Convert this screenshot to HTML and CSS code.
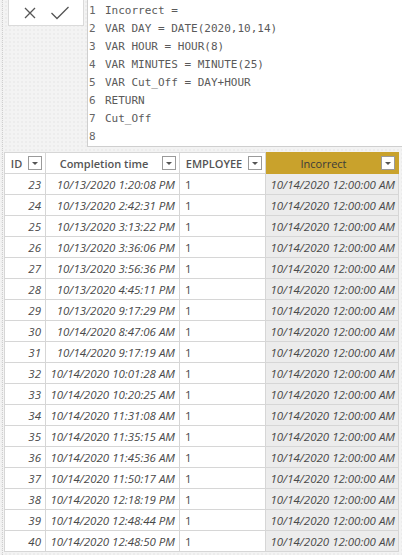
FILE: index.html
```html
<!DOCTYPE html>
<html>
<head>
<meta charset="utf-8">
<link rel="stylesheet" href="styles.css">
</head>
<body>
<div class="page">
  <div class="top">
    <div class="actions">
      <svg class="icon" width="14" height="14" viewBox="0 0 14 14"><path d="M2 2 L12 12 M12 2 L2 12" stroke="#555" stroke-width="1.3" fill="none"/></svg>
      <svg class="icon" width="20" height="14" viewBox="0 0 20 14"><path d="M1.5 7 L7 12.5 L18.5 1" stroke="#555" stroke-width="1.3" fill="none"/></svg>
    </div>
    <div class="editor">
      <div class="line"><span class="num">1</span><span>Incorrect =</span></div>
      <div class="line"><span class="num">2</span><span>VAR DAY = DATE(2020,10,14)</span></div>
      <div class="line"><span class="num">3</span><span>VAR HOUR = HOUR(8)</span></div>
      <div class="line"><span class="num">4</span><span>VAR MINUTES = MINUTE(25)</span></div>
      <div class="line"><span class="num">5</span><span>VAR Cut_Off = DAY+HOUR</span></div>
      <div class="line"><span class="num">6</span><span>RETURN</span></div>
      <div class="line"><span class="num">7</span><span>Cut_Off</span></div>
      <div class="line"><span class="num">8</span><span></span></div>
    </div>
  </div>
  <table class="grid">
    <colgroup><col class="c-id"><col class="c-time"><col class="c-emp"><col class="c-inc"></colgroup>
    <thead>
      <tr>
        <th><div class="hcell"><span class="hlabel">ID</span><span class="filter"></span></div></th>
        <th><div class="hcell"><span class="hlabel">Completion time</span><span class="filter"></span></div></th>
        <th><div class="hcell"><span class="hlabel">EMPLOYEE</span><span class="filter"></span></div></th>
        <th class="sel"><div class="hcell"><span class="hlabel">Incorrect</span><span class="filter"></span></div></th>
      </tr>
    </thead>
    <tbody>
      <tr><td class="id">23</td><td class="time">10/13/2020 1:20:08 PM</td><td class="emp">1</td><td class="inc">10/14/2020 12:00:00 AM</td></tr>
      <tr><td class="id">24</td><td class="time">10/13/2020 2:42:31 PM</td><td class="emp">1</td><td class="inc">10/14/2020 12:00:00 AM</td></tr>
      <tr><td class="id">25</td><td class="time">10/13/2020 3:13:22 PM</td><td class="emp">1</td><td class="inc">10/14/2020 12:00:00 AM</td></tr>
      <tr><td class="id">26</td><td class="time">10/13/2020 3:36:06 PM</td><td class="emp">1</td><td class="inc">10/14/2020 12:00:00 AM</td></tr>
      <tr><td class="id">27</td><td class="time">10/13/2020 3:56:36 PM</td><td class="emp">1</td><td class="inc">10/14/2020 12:00:00 AM</td></tr>
      <tr><td class="id">28</td><td class="time">10/13/2020 4:45:11 PM</td><td class="emp">1</td><td class="inc">10/14/2020 12:00:00 AM</td></tr>
      <tr><td class="id">29</td><td class="time">10/13/2020 9:17:29 PM</td><td class="emp">1</td><td class="inc">10/14/2020 12:00:00 AM</td></tr>
      <tr><td class="id">30</td><td class="time">10/14/2020 8:47:06 AM</td><td class="emp">1</td><td class="inc">10/14/2020 12:00:00 AM</td></tr>
      <tr><td class="id">31</td><td class="time">10/14/2020 9:17:19 AM</td><td class="emp">1</td><td class="inc">10/14/2020 12:00:00 AM</td></tr>
      <tr><td class="id">32</td><td class="time">10/14/2020 10:01:28 AM</td><td class="emp">1</td><td class="inc">10/14/2020 12:00:00 AM</td></tr>
      <tr><td class="id">33</td><td class="time">10/14/2020 10:20:25 AM</td><td class="emp">1</td><td class="inc">10/14/2020 12:00:00 AM</td></tr>
      <tr><td class="id">34</td><td class="time">10/14/2020 11:31:08 AM</td><td class="emp">1</td><td class="inc">10/14/2020 12:00:00 AM</td></tr>
      <tr><td class="id">35</td><td class="time">10/14/2020 11:35:15 AM</td><td class="emp">1</td><td class="inc">10/14/2020 12:00:00 AM</td></tr>
      <tr><td class="id">36</td><td class="time">10/14/2020 11:45:36 AM</td><td class="emp">1</td><td class="inc">10/14/2020 12:00:00 AM</td></tr>
      <tr><td class="id">37</td><td class="time">10/14/2020 11:50:17 AM</td><td class="emp">1</td><td class="inc">10/14/2020 12:00:00 AM</td></tr>
      <tr><td class="id">38</td><td class="time">10/14/2020 12:18:19 PM</td><td class="emp">1</td><td class="inc">10/14/2020 12:00:00 AM</td></tr>
      <tr><td class="id">39</td><td class="time">10/14/2020 12:48:44 PM</td><td class="emp">1</td><td class="inc">10/14/2020 12:00:00 AM</td></tr>
      <tr><td class="id">40</td><td class="time">10/14/2020 12:48:50 PM</td><td class="emp">1</td><td class="inc">10/14/2020 12:00:00 AM</td></tr>
    </tbody>
  </table>
</div>
</body>
</html>
```

FILE: styles.css
```css
html, body {
  margin: 0;
  padding: 0;
}
body {
  background-color: #f3f3f3;
  background-image: radial-gradient(circle, #e2e2e2 0.6px, transparent 0.8px);
  background-size: 4px 4px;
  width: 402px;
  height: 555px;
  overflow: hidden;
}
.page {
  border-left: 1px dotted #cfcfcf;
  margin-left: 2px;
  height: 555px;
  box-sizing: border-box;
}
.top {
  display: flex;
  align-items: flex-start;
  height: 152px;
}
.actions {
  margin-left: 5px;
  width: 74px;
  height: 25px;
  background: #fff;
  border: 1px solid #dadada;
  border-top: none;
  display: flex;
  align-items: center;
  justify-content: center;
  gap: 13px;
}
.actions .icon { display: block; }
.editor {
  margin-left: 3px;
  flex: 1;
  height: 147px;
  background: #fff;
  border-left: 1px solid #cfcfcf;
  border-bottom: 1px solid #cfcfcf;
  box-sizing: border-box;
  padding-top: 2px;
  padding-left: 1px;
  font-family: "DejaVu Sans Mono", monospace;
  font-size: 11px;
  color: #5a5a5a;
}
.line {
  display: flex;
  height: 18px;
  line-height: 18px;
  white-space: pre;
}
.num {
  width: 16px;
  color: #666;
}
.grid {
  margin-left: 1px;
  border-collapse: collapse;
  table-layout: fixed;
  width: 394px;
  font-family: "Open Sans", sans-serif;
  background: #fff;
}
.c-id { width: 41px; }
.c-time { width: 134px; }
.c-emp { width: 86px; }
.c-inc { width: 133px; }
.grid th, .grid td {
  border: 1px solid #d6d6d6;
  padding: 0;
  height: 21px;
  box-sizing: border-box;
}
.grid th {
  background: #fff;
  font-weight: 600;
  font-size: 11px;
  color: #555;
}
.grid th.sel {
  background: #c9a22c;
  color: #3a3a3a;
  font-weight: 400;
  border-color: #c9a22c;
}
.hcell {
  display: flex;
  align-items: center;
  height: 20px;
  padding-right: 3px;
}
.hlabel {
  flex: 1;
  text-align: center;
  white-space: nowrap;
}
.filter {
  width: 12px;
  height: 12px;
  border: 1px solid #9a9a9a;
  background: #fff;
  position: relative;
  flex: none;
}
.filter::after {
  content: "";
  position: absolute;
  left: 3px;
  top: 5px;
  border-left: 3px solid transparent;
  border-right: 3px solid transparent;
  border-top: 3px solid #555;
}
.grid td {
  font-size: 11.5px;
  font-style: italic;
  color: #484848;
  white-space: nowrap;
  overflow: hidden;
}
.grid td.id { text-align: right; padding-right: 4px; }
.grid td.time { text-align: right; padding-right: 4px; }
.grid td.emp { font-style: normal; padding-left: 5px; }
.grid td.inc { text-align: right; padding-right: 3px; background: #ececec; }
```
